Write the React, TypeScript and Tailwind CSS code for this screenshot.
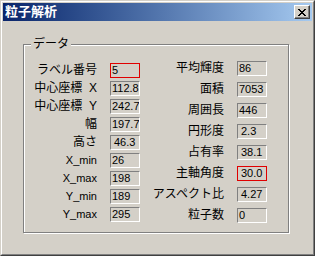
import React from "react";

const font = { fontFamily: '"Liberation Sans", "Noto Sans CJK JP", sans-serif' };

type Row = { label: string; value: string; red?: boolean; pad?: boolean; latin?: boolean };

const left: Row[] = [
  { label: "ラベル番号", value: "5", red: true },
  { label: "中心座標  X", value: "112.8" },
  { label: "中心座標  Y", value: "242.7" },
  { label: "幅", value: "197.7" },
  { label: "高さ", value: "46.3", pad: true },
  { label: "X_min", value: "26", latin: true },
  { label: "X_max", value: "198", latin: true },
  { label: "Y_min", value: "189", latin: true },
  { label: "Y_max", value: "295", latin: true },
];

const right: Row[] = [
  { label: "平均輝度", value: "86" },
  { label: "面積", value: "7053" },
  { label: "周囲長", value: "446" },
  { label: "円形度", value: "2.3", pad: true },
  { label: "占有率", value: "38.1", pad: true },
  { label: "主軸角度", value: "30.0", red: true, pad: true },
  { label: "アスペクト比", value: "4.27", pad: true },
  { label: "粒子数", value: "0" },
];

function Box({ r }: { r: Row }) {
  const border = r.red
    ? "border border-[#e00000]"
    : "border border-t-[#808080] border-l-[#808080] border-b-white border-r-white";
  return (
    <div
      className={`w-[30px] h-[15px] shrink-0 bg-[#d4d0c8] ${border} ${r.pad ? "pl-[3px]" : "pl-[1px]"} text-[11px] leading-[13px] text-black overflow-hidden whitespace-nowrap`}
    >
      {r.value}
    </div>
  );
}

function Label({ r, w }: { r: Row; w: string }) {
  return (
    <div className={`${w} text-right whitespace-pre text-black ${r.latin ? "text-[11px]" : "text-[12px]"} leading-[15px]`}>
      {r.label}
    </div>
  );
}

export default function App() {
  return (
    <div style={font} className="w-[315px] h-[256px] border border-t-[#d4d0c8] border-l-[#d4d0c8] border-b-[#404040] border-r-[#404040] bg-[#d4d0c8]">
      <div className="w-full h-full border border-t-white border-l-white border-b-[#808080] border-r-[#808080] p-[1px] flex flex-col">
        <div className="h-[18px] bg-gradient-to-r from-[#0a246a] to-[#a6caf0] flex items-center justify-between pl-[2px] pr-[2px]">
          <span className="text-white font-bold text-[13px] leading-[18px]">粒子解析</span>
          <div className="w-[16px] h-[14px] bg-[#d4d0c8] border border-t-white border-l-white border-b-[#404040] border-r-[#404040] shadow-[inset_-1px_-1px_0_#808080] flex items-center justify-center">
            <svg width="8" height="7" viewBox="0 0 8 7" shapeRendering="crispEdges">
              <path d="M0 0h2v1h-2zM6 0h2v1h-2zM1 1h2v1h-2zM5 1h2v1h-2zM2 2h4v1h-4zM3 3h2v1h-2zM2 4h4v1h-4zM1 5h2v1h-2zM5 5h2v1h-2zM0 6h2v1h-2zM6 6h2v1h-2z" fill="#000" />
            </svg>
          </div>
        </div>
        <div className="relative mt-[23px] ml-[20px] w-[266px] h-[189px] border border-[#808080] shadow-[1px_1px_0_#fff,inset_1px_1px_0_#fff]">
          <span className="absolute left-[7px] top-[-9px] px-[2px] bg-[#d4d0c8] text-[12px] leading-[16px] text-black">データ</span>
          <div className="flex pl-[3px]">
            <div className="flex flex-col pt-[18px] w-[113px]">
              {left.map((r) => (
                <div key={r.label} className="h-[18px] flex items-start gap-[13px]">
                  <Label r={r} w="w-[70px]" />
                  <Box r={r} />
                </div>
              ))}
            </div>
            <div className="flex flex-col pt-[16px]">
              {right.map((r) => (
                <div key={r.label} className="h-[21px] flex items-start gap-[13px]">
                  <Label r={r} w="w-[84px]" />
                  <Box r={r} />
                </div>
              ))}
            </div>
          </div>
        </div>
      </div>
    </div>
  );
}
